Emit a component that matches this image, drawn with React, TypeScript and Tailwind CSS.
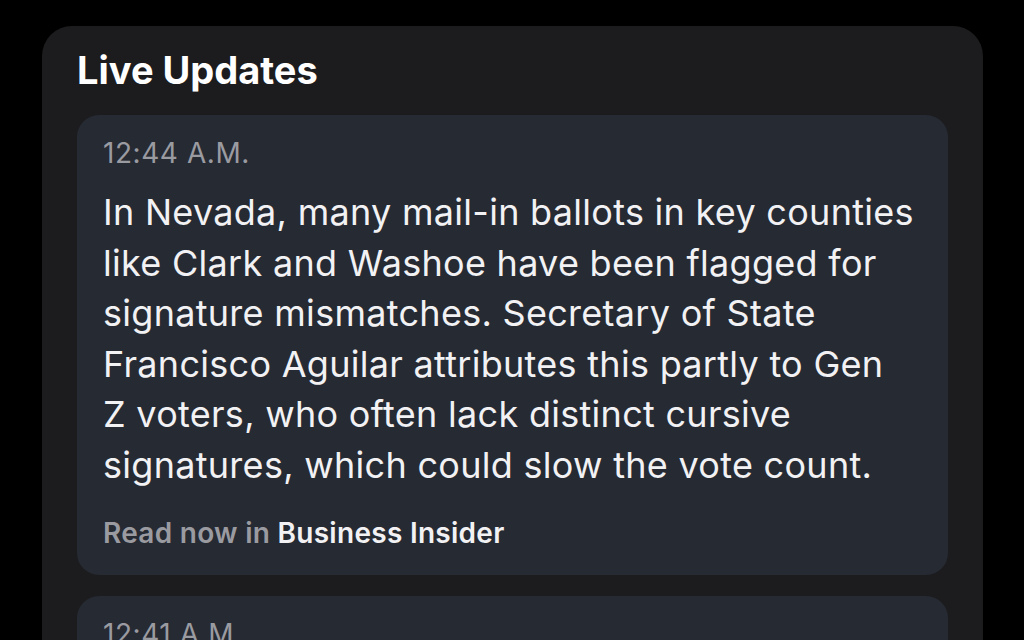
const lines = [
  'In Nevada, many mail-in ballots in key counties',
  'like Clark and Washoe have been flagged for',
  'signature mismatches. Secretary of State',
  'Francisco Aguilar attributes this partly to Gen',
  'Z voters, who often lack distinct cursive',
  'signatures, which could slow the vote count.',
];

function UpdateCard({ time, body, source }: { time: string; body: string[]; source?: string }) {
  return (
    <div className="rounded-[22px] bg-[#262a33] px-[26px] pt-[21px] pb-[25px]">
      <p className="text-[28px] leading-[34px] tracking-[0.02em] text-[#9a9ba1]">{time}</p>
      <p className="mt-[17px] text-[36px] leading-[50.6px] tracking-[0.008em] text-[#f2f2f4] whitespace-nowrap">
        {body.map((l, i) => (
          <span key={i} className="block">{l}</span>
        ))}
      </p>
      {source && (
        <p className="mt-[25px] text-[28px] leading-[34px] font-semibold tracking-[0.01em] text-[#9a9ba1]">
          Read now in <span className="text-[#f2f2f4]">{source}</span>
        </p>
      )}
    </div>
  );
}

export default function App() {
  return (
    <div className="h-[640px] w-[1024px] overflow-hidden bg-black pt-[26px] pl-[42px] pr-[41px]" style={{ fontFamily: 'Inter, "Noto Sans", sans-serif' }}>
      <div className="rounded-[30px] bg-[#1c1c1e] px-[35px] pt-[21px] pb-[40px]">
        <h1 className="text-[38px] leading-[46px] font-bold text-white">Live Updates</h1>
        <div className="mt-[22px] flex flex-col gap-[21px]">
          <UpdateCard time="12:44 A.M." body={lines} source="Business Insider" />
          <UpdateCard time="12:41 A.M." body={lines} source="Business Insider" />
        </div>
      </div>
    </div>
  );
}
